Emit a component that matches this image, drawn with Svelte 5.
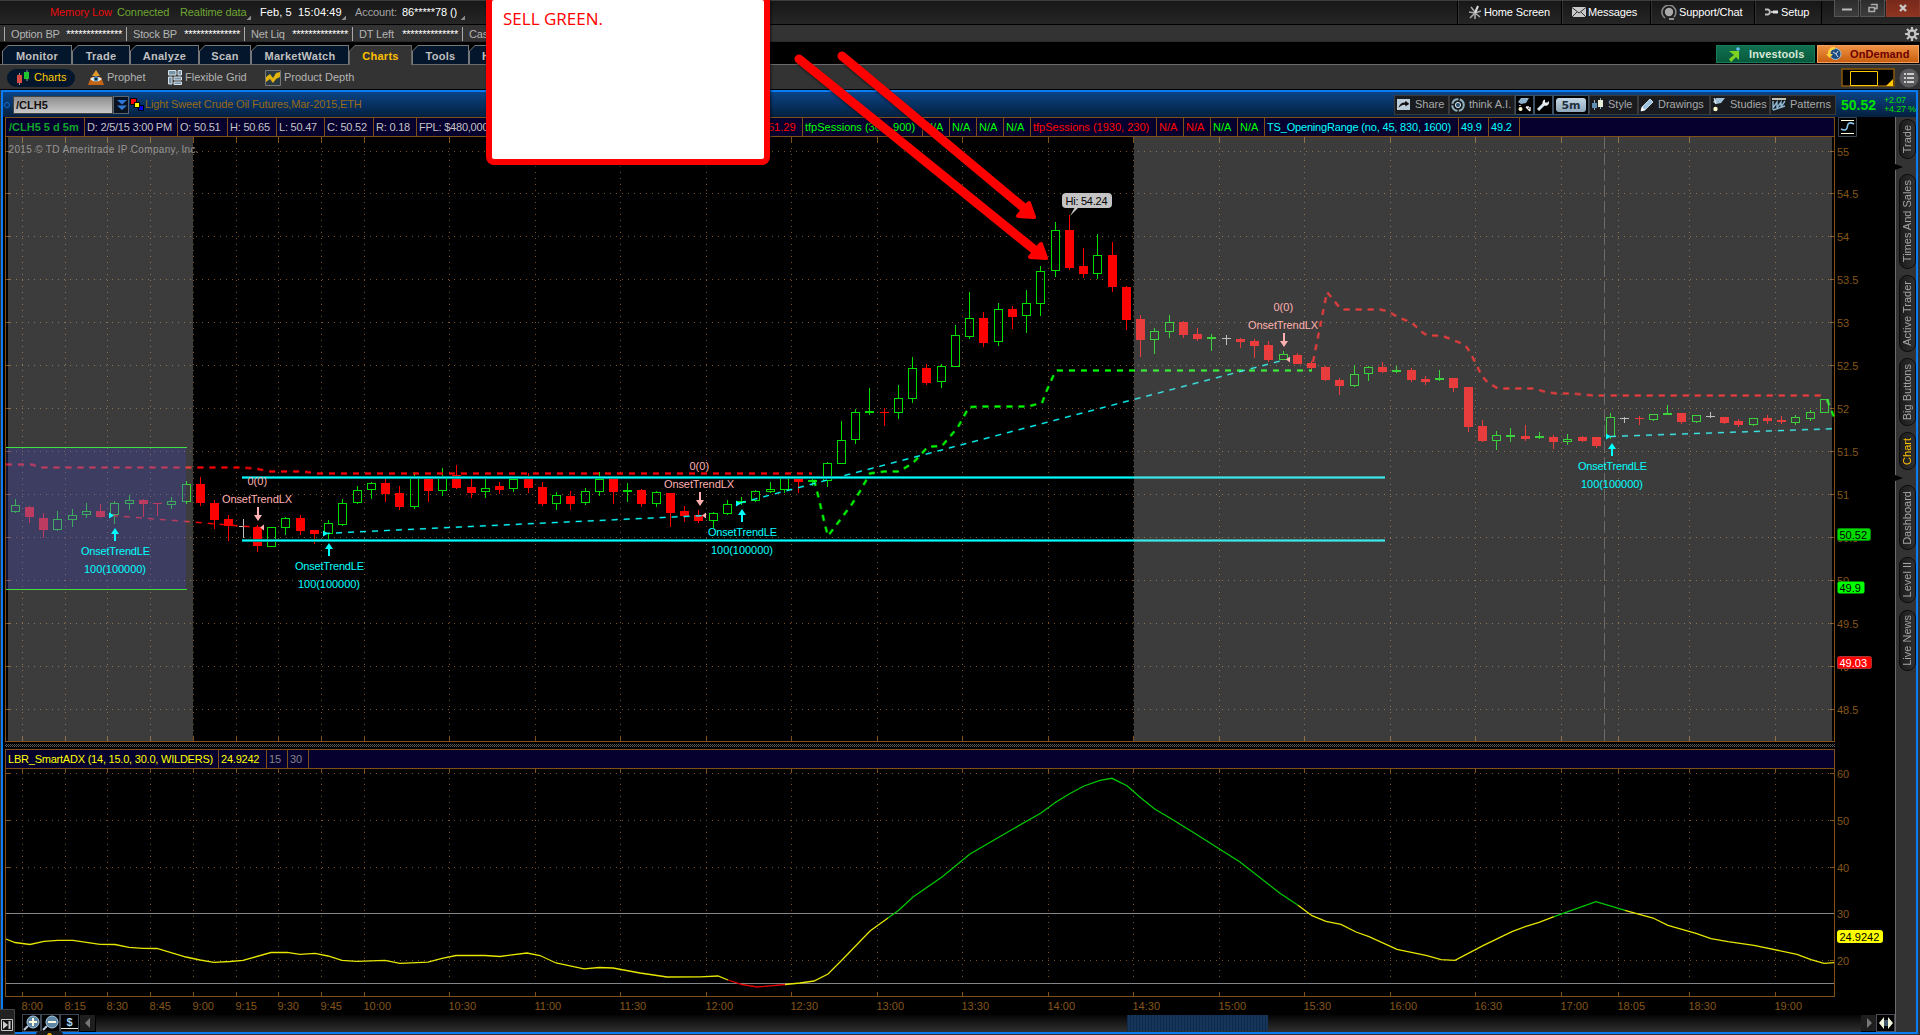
<script lang="ts">
	const accountStats = [
		{ label: 'Option BP', gap: 122 },
		{ label: 'Stock BP', gap: 118 },
		{ label: 'Net Liq', gap: 108 },
		{ label: 'DT Left', gap: 110 },
		{ label: 'Cash', gap: 100 },
	];

	const tabs = [
		{ name: 'Monitor', width: 70 },
		{ name: 'Trade', width: 58 },
		{ name: 'Analyze', width: 69 },
		{ name: 'Scan', width: 52 },
		{ name: 'MarketWatch', width: 98 },
		{ name: 'Charts', width: 63, active: true },
		{ name: 'Tools', width: 57 },
		{ name: 'Help', width: 51 },
	];

	const legend = [
		{ text: '/CLH5 5 d 5m', width: 79, kind: 'symbol' },
		{ text: 'D: 2/5/15 3:00 PM', width: 93, kind: 'plain' },
		{ text: 'O: 50.51', width: 50, kind: 'plain' },
		{ text: 'H: 50.65', width: 49, kind: 'plain' },
		{ text: 'L: 50.47', width: 48, kind: 'plain' },
		{ text: 'C: 50.52', width: 49, kind: 'plain' },
		{ text: 'R: 0.18', width: 43, kind: 'plain' },
		{ text: 'FPL: $480,000', width: 349, kind: 'plain' },
		{ text: '51.29', width: 37, kind: 'red' },
		{ text: 'tfpSessions (300, 900)', width: 120, kind: 'green' },
		{ text: 'N/A', width: 27, kind: 'green' },
		{ text: 'N/A', width: 27, kind: 'green' },
		{ text: 'N/A', width: 27, kind: 'green' },
		{ text: 'N/A', width: 27, kind: 'green' },
		{ text: 'tfpSessions (1930, 230)', width: 126, kind: 'red' },
		{ text: 'N/A', width: 27, kind: 'red' },
		{ text: 'N/A', width: 27, kind: 'red' },
		{ text: 'N/A', width: 27, kind: 'green' },
		{ text: 'N/A', width: 27, kind: 'green' },
		{ text: 'TS_OpeningRange (no, 45, 830, 1600)', width: 194, kind: 'cyan' },
		{ text: '49.9', width: 30, kind: 'cyan' },
		{ text: '49.2', width: 31, kind: 'cyan' },
	];

	const adxLegend = [
		{ text: 'LBR_SmartADX (14, 15.0, 30.0, WILDERS)', width: 213, kind: 'yellow' },
		{ text: '24.9242', width: 48, kind: 'yellow' },
		{ text: '15', width: 21, kind: 'gray' },
		{ text: '30', width: 21, kind: 'gray' },
	];

	const sideTabs = [
		{ name: 'Trade', height: 40, gap: 15 },
		{ name: 'Times And Sales', height: 95, gap: 6 },
		{ name: 'Active Trader', height: 77, gap: 6 },
		{ name: 'Big Buttons', height: 68, gap: 6 },
		{ name: 'Chart', height: 38, gap: 15, active: true },
		{ name: 'Dashboard', height: 65, gap: 7 },
		{ name: 'Level II', height: 46, gap: 7 },
		{ name: 'Live News', height: 61, gap: 0 },
	];

	const times: [number, string][] = [
		[22, '8:00'], [65, '8:15'], [107, '8:30'], [150, '8:45'], [193, '9:00'], [236, '9:15'],
		[278, '9:30'], [321, '9:45'], [364, '10:00'], [449, '10:30'], [535, '11:00'], [620, '11:30'],
		[706, '12:00'], [791, '12:30'], [877, '13:00'], [962, '13:30'], [1048, '14:00'], [1133, '14:30'],
		[1219, '15:00'], [1304, '15:30'], [1390, '16:00'], [1475, '16:30'], [1561, '17:00'], [1618, '18:05'],
		[1689, '18:30'], [1775, '19:00'],
	];

	const prices = Array.from({ length: 14 }, (_, i) => ({
		label: String(55 - i * 0.5),
		y: i === 0 ? 151 : 150 + i * 43,
	}));

	const adxLevels = [
		{ label: '60', y: 773 },
		{ label: '50', y: 820 },
		{ label: '40', y: 867 },
		{ label: '30', y: 913 },
		{ label: '20', y: 960 },
	];

	// high, body top, body bottom, low, up / down / flat
	const candles: [number, number, number, number, string][] = [
		[499, 505, 512, 513, 'g'], [506, 507, 517, 523, 'r'], [513, 518, 530, 538, 'r'], [511, 519, 530, 531, 'g'],
		[509, 515, 520, 527, 'g'], [503, 511, 515, 518, 'g'], [504, 511, 517, 518, 'r'], [501, 503, 515, 524, 'g'],
		[495, 500, 504, 510, 'g'], [499, 500, 504, 517, 'r'], [503, 503, 504, 516, 'r'], [497, 501, 505, 509, 'g'],
		[481, 484, 502, 504, 'g'], [477, 484, 503, 506, 'r'], [500, 503, 520, 529, 'r'], [515, 519, 526, 541, 'r'],
		[519, 526, 527, 538, 'w'], [525, 527, 546, 552, 'r'], [527, 527, 547, 547, 'g'], [517, 518, 528, 535, 'g'],
		[515, 518, 531, 535, 'r'], [530, 530, 534, 544, 'r'], [520, 523, 534, 540, 'g'], [499, 503, 525, 526, 'g'],
		[486, 490, 503, 504, 'g'], [482, 483, 490, 499, 'g'], [479, 483, 494, 502, 'r'], [486, 493, 507, 510, 'r'],
		[472, 478, 507, 509, 'g'], [478, 479, 491, 502, 'r'], [468, 476, 491, 496, 'g'], [465, 475, 488, 489, 'r'],
		[478, 487, 493, 498, 'r'], [478, 488, 492, 498, 'g'], [482, 486, 490, 494, 'r'], [478, 479, 489, 492, 'g'],
		[473, 479, 488, 493, 'r'], [482, 487, 504, 506, 'r'], [492, 495, 504, 510, 'g'], [491, 496, 504, 510, 'r'],
		[488, 491, 503, 505, 'g'], [472, 479, 492, 496, 'g'], [476, 478, 492, 504, 'r'], [483, 490, 492, 502, 'g'],
		[489, 490, 504, 507, 'r'], [491, 492, 504, 507, 'g'], [493, 493, 513, 527, 'r'], [506, 511, 516, 522, 'r'],
		[510, 515, 521, 523, 'r'], [512, 513, 521, 528, 'g'], [500, 504, 514, 515, 'g'], [497, 501, 503, 505, 'g'],
		[490, 491, 501, 502, 'g'], [482, 489, 492, 493, 'g'], [478, 478, 490, 493, 'g'], [478, 478, 482, 493, 'r'],
		[478, 480, 482, 486, 'g'], [462, 463, 481, 487, 'g'], [421, 440, 464, 464, 'g'], [409, 412, 440, 444, 'g'],
		[388, 411, 413, 415, 'g'], [408, 412, 413, 426, 'r'], [385, 398, 413, 419, 'g'], [357, 368, 399, 403, 'g'],
		[364, 368, 383, 385, 'r'], [364, 366, 382, 388, 'g'], [325, 335, 367, 367, 'g'], [292, 318, 337, 339, 'g'],
		[312, 318, 343, 347, 'r'], [303, 309, 342, 346, 'g'], [306, 309, 317, 329, 'r'], [290, 303, 316, 333, 'g'],
		[266, 271, 304, 316, 'g'], [222, 230, 271, 277, 'g'], [215, 230, 268, 270, 'r'], [248, 266, 274, 278, 'r'],
		[234, 255, 274, 279, 'g'], [242, 255, 287, 292, 'r'], [286, 287, 320, 330, 'r'], [315, 319, 340, 357, 'r'],
		[328, 331, 340, 354, 'g'], [315, 322, 332, 338, 'g'], [321, 322, 335, 338, 'r'], [328, 334, 339, 341, 'r'],
		[334, 337, 339, 351, 'g'], [335, 338, 339, 345, 'w'], [338, 339, 342, 348, 'r'], [339, 341, 346, 358, 'r'],
		[341, 345, 360, 362, 'r'], [351, 354, 360, 360, 'g'], [353, 355, 364, 364, 'r'], [361, 363, 368, 371, 'r'],
		[366, 367, 380, 381, 'r'], [378, 380, 386, 395, 'r'], [365, 374, 386, 387, 'g'], [366, 367, 374, 381, 'g'],
		[362, 367, 372, 373, 'r'], [366, 370, 372, 373, 'g'], [368, 370, 380, 382, 'r'], [376, 379, 382, 385, 'r'],
		[370, 378, 380, 381, 'g'], [378, 378, 388, 392, 'r'], [387, 387, 427, 432, 'r'], [420, 426, 441, 442, 'r'],
		[431, 435, 441, 450, 'g'], [428, 435, 437, 442, 'g'], [425, 436, 439, 441, 'r'], [432, 436, 438, 439, 'g'],
		[435, 437, 442, 449, 'r'], [434, 439, 442, 445, 'g'], [436, 437, 441, 442, 'r'], [437, 437, 446, 448, 'r'],
		[413, 417, 437, 439, 'g'], [417, 418, 419, 423, 'w'], [416, 418, 419, 425, 'r'], [414, 414, 420, 421, 'g'],
		[405, 413, 415, 415, 'g'], [413, 413, 422, 424, 'r'], [415, 415, 422, 423, 'g'], [412, 416, 417, 418, 'w'],
		[417, 417, 423, 424, 'r'], [419, 421, 425, 427, 'r'], [418, 418, 425, 426, 'g'], [415, 418, 421, 424, 'r'],
		[416, 420, 422, 424, 'r'], [415, 417, 423, 425, 'g'], [410, 412, 419, 421, 'g'], [399, 399, 413, 413, 'g'],
	];
	const bars = candles.map(([high, top, bottom, low, kind], i) => ({
		x: Math.floor(15.2 + i * 14.245),
		high, top, bottom, low, kind,
		hollow: kind === 'g' && bottom - top > 2,
	}));

	const trails = [
		{ kind: 'down', points: '6,464.5 32,464.5 40,467.5 243,467.5 258,469 270,471.5 304,471.5 316,473.5 812,473.5' },
		{ kind: 'up', points: '814,480 817,491 825,525 828,536 852,504 859,493 870,473.5 884,471.5 899,471.5 913,463 928,446.7 942,446 958,427 969,407 984,406.5 1027,406.5 1042,403 1047,390 1055,372 1057,370.5 1312,370.5' },
		{ kind: 'down', points: '1313,362 1327,292 1340,308 1343,309.5 1380,309.5 1387,311 1398,317 1412,323 1422,332 1427,335.5 1442,335.7 1453,340 1465,345 1470,352 1476,364 1482,376 1488,382.7 1498,388.5 1533,388.5 1548,392.5 1557,393.5 1570,393.5 1583,394.5 1593,395.5 1824,395.5' },
		{ kind: 'up', points: '1827,399.7 1834,417' },
	];

	const trades = [
		{ kind: 'lose', points: '112,515.5 262,527.7' },
		{ kind: 'win', points: '324,533.5 460,527 705,515.5' },
		{ kind: 'win', points: '740,503 1284,360' },
		{ kind: 'win', points: '1610,436.5 1834,428.7' },
	];

	const entries = [
		{ x: 115, y: 528, mx: 109, my: 515 },
		{ x: 329, y: 543, mx: 323, my: 533 },
		{ x: 742, y: 509, mx: 736, my: 503 },
		{ x: 1612, y: 443, mx: 1606, my: 436 },
	];
	const exits = [
		{ x: 258, y: 507, mx: 264, my: 527 },
		{ x: 700, y: 492, mx: 706, my: 515 },
		{ x: 1284, y: 333, mx: 1290, my: 359 },
	];

	const adx = [
		{ color: '#e6e600', points: '6,939 15,942.5 30,944.5 44,941.3 58,940.4 73,940.4 100,944.4 115,944.5 129,947.4 143,948.4 157,948.5 186,957 200,960 214,962.3 230,961.5 243,960.4 271,952.5 287,952.4 300,954.4 315,953.4 328,956 342,960.4 357,961.4 385,960.4 400,963.4 428,962.2 442,958.4 456,955.5 485,955.5 500,956.5 527,953 540,955.5 556,963 584,968.8 599,967.5 613,968 640,973 667,977 700,976.8 718,976 728,980' },
		{ color: '#e00000', points: '728,980 742,984.5 757,987 785,984.5' },
		{ color: '#e6e600', points: '785,984.5 800,983 814,981 828,974 842,960 870,931 888,918' },
		{ color: '#00c800', points: '888,918 899,910 913,897 942,877 970,854 1013,829 1041,813 1056,802 1070,793.5 1084,786 1100,780.3 1112,778.3 1127,785.7 1141,798 1155,809.3 1170,818 1199,836 1240,862 1280,893.3 1298,905.3' },
		{ color: '#e6e600', points: '1298,905.3 1312,915.7 1326,921.3 1341,924.3 1356,932 1369,936.7 1397,949.3 1427,955.7 1441,959.7 1455,960.4 1483,945.7 1512,931.7 1526,926.3 1539,922.3 1554,916.7' },
		{ color: '#00c800', points: '1554,916.7 1596,901.7 1625,910.3' },
		{ color: '#e6e600', points: '1625,910.3 1653,918 1668,925.3 1696,933.3 1711,938.7 1728,941.7 1754,945.3 1797,954.3 1811,959.7 1824,963.4 1834,962.7' },
	];
</script>

<div class="screen">
	<header class="topbar">
		<div class="status">
			<span class="red" style="width: 67px">Memory Low</span>
			<span class="ok" style="width: 63px">Connected</span>
			<span class="ok" style="width: 66px">Realtime data</span>
			<i class="corner"></i>
			<span class="white wide" style="width: 81px">Feb, 5&nbsp; 15:04:49</span>
			<i class="corner"></i>
			<span class="dim" style="width: 47px">Account:</span>
			<span class="white" style="width: 58px">86*****78 ()</span>
			<i class="corner"></i>
		</div>
		<nav class="menu">
			<a style="width: 104px">
				<svg width="14" height="15" viewBox="0 0 14 15"><g stroke="#a8a8a8" stroke-width="1.6"><path d="M7 8V14M7 8L1 7M7 8L2 13M7 8L12 12M7 8L13 6M7 7L3 2" /><path d="M7 8L10 1" stroke="#ddd" stroke-width="2" /></g></svg>
				Home Screen
			</a>
			<a style="width: 89px">
				<svg width="14" height="10" viewBox="0 0 14 10"><path d="M0 0H14V10H0Z" fill="#c8c8c8" /><path d="M0 .5L7 6L14 .5M0 10L5 5M14 10L9 5" stroke="#333" fill="none" /></svg>
				Messages
			</a>
			<a style="width: 104px">
				<svg width="16" height="15" viewBox="0 0 16 15"><circle cx="8" cy="7" r="4.2" fill="#aaa" /><path d="M4 13A7 7 0 1 1 13 12" stroke="#888" stroke-width="1.6" fill="none" /><path d="M8 14H13" stroke="#bbb" stroke-width="1.5" /></svg>
				Support/Chat
			</a>
			<a style="width: 67px">
				<svg width="14" height="8" viewBox="0 0 14 8"><path d="M0 1.5H3A2.6 2.6 0 0 1 3 6.5H0M6 4H13" stroke="#bbb" stroke-width="2" fill="none" /><path d="M8 4H13" stroke="#ddd" stroke-width="3" /></svg>
				Setup
			</a>
		</nav>
		<div class="window-buttons">
			<button aria-label="Minimize"><svg width="10" height="10"><path d="M0 6.5H10" stroke="#bbb" stroke-width="2" /></svg></button>
			<button aria-label="Restore"><svg width="10" height="10"><path d="M3.5 1V1.5H9V5.5H7" stroke="#aaa" fill="none" stroke-width="1.6" /><path d="M1 4.5H6.5V8.5H1Z" stroke="#aaa" fill="none" stroke-width="1.6" /></svg></button>
			<button class="close" aria-label="Close"><svg width="8" height="8"><path d="M1 1L7 7M7 1L1 7" stroke="#c8c8c8" stroke-width="2.4" /></svg></button>
		</div>
	</header>

	<div class="account">
		{#each accountStats as stat}
			<div class="stat" style="width: {stat.gap}px"><span>{stat.label}</span><b>**************</b></div>
		{/each}
		<svg class="gear" width="14" height="14" viewBox="-7 -7 14 14"><circle r="3.5" stroke="#c4c4c4" stroke-width="2.4" fill="none" /><path d="M0-7V-4M0 4V7M-7 0H-4M4 0H7M-5-5L-3-3M5 5L3 3M-5 5L-3 3M5-5L3-3" stroke="#c4c4c4" stroke-width="2.2" /></svg>
	</div>

	<div class="tabs">
		{#each tabs as tab}
			<div class="tab" class:active={tab.active} style="width: {tab.width}px"><span>{tab.name}</span></div>
		{/each}
		<div class="promo investools">
			<svg width="13" height="15" viewBox="0 0 13 15"><path d="M1 4L11 4V13L8 10L3 15L1 12L6 8Z" fill="#7ed321" /><circle cx="10" cy="2" r="1.8" fill="#6cc0ff" /></svg>
			Investools
		</div>
		<div class="promo ondemand">
			<svg width="16" height="14" viewBox="0 0 16 14"><circle cx="9.5" cy="7" r="5.5" fill="#1d4b7d" stroke="#9fc4e0" /><path d="M7 5L10 7L12 4M10 7L12 10" stroke="#cde" fill="none" /><path d="M9 1Q3 1 3 7" stroke="#ffd23c" stroke-width="2.4" fill="none" /><path d="M0 7H7L3.5 11Z" fill="#ffd23c" /></svg>
			OnDemand
		</div>
	</div>

	<div class="views">
		<div class="view on">
			<svg width="15" height="15" viewBox="0 0 15 15"><path d="M3.5 3V15M11 0V11" stroke="#999" /><path d="M1 5H6V13H1Z" fill="#d84c42" /><path d="M8 2H13V9H8Z" fill="#1ec32e" /></svg>
			<span>Charts</span>
		</div>
		<div class="view" style="width: 80px">
			<svg width="16" height="15" viewBox="0 0 16 15"><path d="M8 0L12 6H4Z" fill="#e39a2d" /><path d="M3 7H13L16 15H0Z" fill="#c26516" /><path d="M2 9Q8 4 14 9Q8 14 2 9Z" fill="#e8f2f6" /><circle cx="8" cy="9" r="2.4" fill="#3d7fae" /><circle cx="8" cy="9" r="1" fill="#000" /></svg>
			<span>Prophet</span>
		</div>
		<div class="view" style="width: 97px">
			<svg width="14" height="15" viewBox="0 0 14 15"><path d="M.5.5H8V5H.5ZM10 .5H13.5V5H10ZM.5 7H4V14H.5ZM6 7H13.5V10H6ZM6 12H13.5V14.5H6Z" fill="#7893a6" stroke="#d7e3ea" /></svg>
			<span>Flexible Grid</span>
		</div>
		<div class="view">
			<svg width="16" height="16" viewBox="0 0 16 16"><path d="M.5.5H15.5V15.5H.5Z" fill="#2a3a40" stroke="#777" /><path d="M1 7L5 4L8 8L11 3L15 2V7L11 9L8 13L5 9L1 12Z" fill="#e2b410" /></svg>
			<span>Product Depth</span>
		</div>
		<svg class="layout" width="54" height="19"><path d="M1 1H53V18H1Z" fill="#000" stroke="#8a5a08" stroke-width="1.5" /><path d="M9.5 3.5H36.5V17.5H9.5Z" fill="none" stroke="#ffc800" /><path d="M52 11V18H45Z" fill="#ffc800" /></svg>
		<svg class="list" width="20" height="20"><circle cx="10" cy="10" r="9.5" fill="#5a5a5f" /><path d="M5 6H7M8 6H15M5 10H7M8 10H15M5 14H7M8 14H15" stroke="#ccc" stroke-width="2" /></svg>
	</div>

	<main class="frame">
		<div class="head">
			<i class="dot"></i>
			<div class="symbol-input">/CLH5</div>
			<div class="dropdown"><svg width="12" height="12"><path d="M1 1H11L6 5.5ZM1 6.5H11L6 11Z" fill="#2f78d8" /></svg></div>
			<svg width="14" height="14" class="link"><path d="M.5.5H6.5V6.5H.5Z" fill="#f00" stroke="#000" /><path d="M8.5 7.5H13.5V12.5H8.5Z" fill="#00e" stroke="#000" /><path d="M4.5 4.5H9.5V9.5H4.5Z" fill="#ff0" stroke="#000" /></svg>
			<span class="title">Light Sweet Crude Oil Futures,Mar-2015,ETH</span>
			<div class="tools">
				<div class="tool" style="width: 55px"><svg width="15" height="13" viewBox="0 0 15 13"><path d="M1 1H14V12H1Z" fill="#b9cdd9" /><path d="M2 11Q3 4 9 4V2L14 6L9 9V7Q5 7 2 11Z" fill="#111" stroke="#eef" stroke-width=".6" /></svg>Share</div>
				<div class="tool" style="width: 66px"><svg width="14" height="14" viewBox="0 0 14 14"><circle cx="7" cy="7" r="5.8" fill="none" stroke="#8fb0bd" stroke-width="2" stroke-dasharray="8 1.5" /><circle cx="7" cy="7" r="2.6" fill="#2d536e" stroke="#d5e8ef" /></svg>think A.I.</div>
				<div class="tool dark" style="width: 19px"><svg width="14" height="15" viewBox="0 0 14 15"><path d="M4 1H12L9 6L4 7L1 5Z" fill="#8fb2cc" /><path d="M3 8V9M12 10L9 10M9 10L13 14M13 14V10" stroke="#eee" stroke-width="1.4" fill="none" /><circle cx="3.5" cy="12" r="2" fill="#fffbd0" /></svg></div>
				<div class="tool dark" style="width: 19px"><svg width="14" height="14" viewBox="0 0 14 14"><path d="M2 12L9 5" stroke="#d7e6ec" stroke-width="3" /><path d="M12.5 3A3.2 3.2 0 1 1 9 1.5V4.5H11.5Z" fill="#e9f1f4" /></svg></div>
				<div class="tool dark" style="width: 36px"><b class="interval">5m</b></div>
				<div class="tool" style="width: 49px"><svg width="13" height="13" viewBox="0 0 13 13"><path d="M3.5 2V12M9.5 0V11" stroke="#8fb0c4" /><path d="M1 5H6V10H1Z" fill="#5e8db0" /><path d="M7 2H12V9H7Z" fill="#e8edd8" /></svg>Style</div>
				<div class="tool" style="width: 72px"><svg width="14" height="14" viewBox="0 0 14 14"><path d="M10 1L13 4L5 12L1 13L2 9Z" fill="#9cc3df" stroke="#e6eff4" stroke-width=".8" /><path d="M1 13L2 9L5 12Z" fill="#fff" /></svg>Drawings</div>
				<div class="tool" style="width: 60px"><svg width="14" height="15" viewBox="0 0 14 15"><path d="M4 1H13L9 6L4 7L1 5Z" fill="#9fbfd6" /><path d="M2 1L4 7" stroke="#eee" /><circle cx="3.5" cy="12" r="2.2" fill="#fffbd0" /></svg>Studies</div>
				<div class="tool" style="width: 66px"><svg width="14" height="13" viewBox="0 0 14 13"><path d="M0 1H14" stroke="#e9edd8" stroke-width="1.6" /><path d="M1 3V10L5 4V10L9 4V9L13 3M1 12L13 8" stroke="#8fb8d4" stroke-width="1.4" fill="none" /></svg>Patterns</div>
			</div>
			<strong class="last">50.52</strong>
			<div class="change"><span>+2.07</span><span>+4.27 %</span></div>
		</div>

		<div class="body">
			<section class="chart">
				<div class="legend-row">
					<div class="legend">
						{#each legend as item}
							<span class={item.kind} style="width: {item.width}px">{item.text}</span>
						{/each}
					</div>
					<svg class="curve" width="19" height="20"><path d="M.5.5H18.5V19.5H.5Z" fill="#000" stroke="#3c4753" /><path d="M3 3.5H16M3 16.5H16" stroke="#fffde0" /><path d="M3 12Q9 15 9.5 9Q10 4 16 7" stroke="#8ac6f0" stroke-width="1.6" fill="none" /></svg>
				</div>

				<svg class="price" width="1892" height="612" viewBox="3 137 1892 612">
					<rect x="3" y="137" width="1892" height="612" fill="#000" />
					<g class="crisp dots">
						{#each times as [x]}
							<path d="M{x + 0.5} 142V737" />
						{/each}
						{#each prices as price}
							<path d="M10 {price.y + 0.5}H1830" />
						{/each}
					</g>
					<g class="crisp ticks">
						{#each times as [x]}
							<path d="M{x + 0.5} 137V142M{x + 0.5} 737V741" />
						{/each}
						{#each prices as price}
							<path d="M6 {price.y + 0.5}H11M1830 {price.y + 0.5}H1834" />
						{/each}
						<path d="M5.5 137V742M5 741.5H1835M1834.5 137V742" />
					</g>

					<g class="crisp">
						{#each bars as bar}
							{#if bar.hollow}
								<path class="up" d="M{bar.x + 0.5} {bar.high}V{bar.top}M{bar.x + 0.5} {bar.bottom}V{bar.low}M{bar.x - 3.5} {bar.top + 0.5}H{bar.x + 4.5}V{bar.bottom - 0.5}H{bar.x - 3.5}Z" />
							{:else}
								<rect class={bar.kind} x={bar.x} y={bar.high} width="1" height={bar.low - bar.high} />
								<rect class={bar.kind} x={bar.x - 4} y={bar.top} width="9" height={bar.bottom - bar.top} />
							{/if}
						{/each}
					</g>

					{#each trails as trail}
						<polyline class="trail halo {trail.kind}" points={trail.points} />
						<polyline class="trail {trail.kind}" points={trail.points} />
					{/each}
					{#each trades as trade}
						<polyline class="trade halo {trade.kind}" points={trade.points} />
						<polyline class="trade {trade.kind}" points={trade.points} />
					{/each}
					<g class="crisp">
						<path d="M242 477.5H1385M242 540.5H1385" stroke="#009c9c" stroke-width="3" />
						<path d="M242 477.5H1385M242 540.5H1385" stroke="#00ffff" />
					</g>

					<path d="M8 137H193V741H8ZM1134 137H1832V741H1134Z" fill="#bbb" fill-opacity=".32" />
					<rect x="6" y="447" width="180" height="143" fill="#4440c8" fill-opacity=".27" />
					<path class="crisp" d="M6 447.5H187M6 589.5H187" stroke="#3fe03f" />
					<path class="crisp" d="M1604.5 137V741" stroke="#6c6c6c" stroke-dasharray="12 4" />

					{#each entries as e}
						<path d="M{e.mx} {e.my - 2.5}L{e.mx + 5} {e.my + 0.5}L{e.mx} {e.my + 3.5}Z" fill="#0ff" />
						<path d="M{e.x} {e.y}L{e.x + 4} {e.y + 6}H{e.x + 1}V{e.y + 13}H{e.x - 1}V{e.y + 6}H{e.x - 4}Z" fill="#0ff" />
						<text class="le" x={e.x - 34} y={e.y + 27} textLength="69">OnsetTrendLE</text>
						<text class="le" x={e.x - 31} y={e.y + 45} textLength="62">100(100000)</text>
					{/each}
					{#each exits as e}
						<path d="M{e.mx} {e.my - 2.5}L{e.mx - 4} {e.my + 0.5}L{e.mx} {e.my + 3.5}Z" fill="#ffb0b0" />
						<path d="M{e.x} {e.y + 14}L{e.x + 4} {e.y + 8}H{e.x + 1}V{e.y}H{e.x - 1}V{e.y + 8}H{e.x - 4}Z" fill="#ffb0b0" />
						<text class="lx" x={e.x - 36} y={e.y - 4} textLength="70">OnsetTrendLX</text>
						<text class="lx" x={e.x - 10.5} y={e.y - 22}>0(0)</text>
					{/each}

					<path d="M1075 207L1070 216L1079 207Z" fill="#c4c4c4" />
					<rect x="1062" y="193" width="50" height="15" rx="4" fill="#c4c4c4" />
					<text x="1065.5" y="205" textLength="42" fill="#000">Hi: 54.24</text>
					<text class="watermark" x="8.5" y="153" textLength="190">2015 © TD Ameritrade IP Company, Inc.</text>

					{#each prices as price}
						<text class="axis" x="1837" y={price.y + 5}>{price.label}</text>
					{/each}
					<rect x="1837.5" y="528.5" width="33" height="12" rx="2" fill="#00dc00" stroke="#008c00" />
					<text x="1839.5" y="539" fill="#000">50.52</text>
					<rect x="1837.5" y="581.5" width="27" height="12" rx="2" fill="#0f0" />
					<text x="1839.5" y="592" fill="#000">49.9</text>
					<rect x="1837.5" y="656.5" width="34" height="12" rx="2" fill="#f00" stroke="#a33" />
					<text x="1839.5" y="667" fill="#fff">49.03</text>

					<defs>
						<pattern id="grip" width="2" height="2" patternUnits="userSpaceOnUse"><rect width="1" height="1" fill="#555" /><rect x="1" y="1" width="1" height="1" fill="#555" /></pattern>
					</defs>
					<rect x="5" y="744" width="1830" height="3" fill="url(#grip)" />
				</svg>

				<div class="legend-row">
					<div class="legend">
						{#each adxLegend as item}
							<span class={item.kind} style="width: {item.width}px">{item.text}</span>
						{/each}
					</div>
				</div>

				<svg class="adx" width="1892" height="245" viewBox="3 769 1892 245">
					<rect x="3" y="769" width="1892" height="245" fill="#000" />
					<g class="crisp dots">
						{#each times as [x]}
							<path d="M{x + 0.5} 778V980" />
						{/each}
						{#each adxLevels as level}
							{#if level.label !== '30'}
								<path d="M10 {level.y + 0.5}H1830" />
							{/if}
						{/each}
					</g>
					<g class="crisp ticks">
						{#each times as [x]}
							<path d="M{x + 0.5} 769V773M{x + 0.5} 992V996" />
						{/each}
						{#each adxLevels as level}
							<path d="M6 {level.y + 0.5}H11M1830 {level.y + 0.5}H1834" />
						{/each}
						<path d="M5.5 769V997M5 996.5H1835M1834.5 769V997" />
						<path d="M6 913.5H1834M6 983.5H1834" stroke="#868686" />
					</g>
					{#each adx as part}
						<polyline points={part.points} fill="none" stroke={part.color} stroke-width="1.3" />
					{/each}
					{#each adxLevels as level}
						<text class="axis" x="1837" y={level.y + 5}>{level.label}</text>
					{/each}
					<rect x="1837" y="930" width="46" height="13" rx="3" fill="#ff0" />
					<text x="1839.5" y="941" fill="#000">24.9242</text>
					{#each times as [x, label]}
						<text class="axis" x={x - 0.5} y="1010">{label}</text>
					{/each}
				</svg>

				<div class="scroll">
					<div class="zoom"><svg width="17" height="16" viewBox="0 0 17 16"><circle cx="10" cy="7" r="6" fill="#5f87a5" stroke="#a9cbe2" /><path d="M6 7H14M10 3V11" stroke="#fffde0" stroke-width="2" /><path d="M1 15L5 11" stroke="#bcd" stroke-width="2" /></svg></div>
					<div class="zoom"><svg width="17" height="16" viewBox="0 0 17 16"><circle cx="10" cy="7" r="6" fill="#5f87a5" stroke="#a9cbe2" /><path d="M6 7H14" stroke="#fffde0" stroke-width="2" /><path d="M1 15L5 11" stroke="#bcd" stroke-width="2" /></svg></div>
					<div class="zoom dollar">$</div>
					<div class="step"><svg width="6" height="10"><path d="M5 0V10L0 5Z" fill="#777" /></svg></div>
					<div class="track"><div class="thumb"></div></div>
					<div class="step last-step"><svg width="6" height="10"><path d="M1 0V10L6 5Z" fill="#777" /></svg></div>
					<div class="fit"><svg width="14" height="12"><path d="M5 0V12L0 6ZM9 0V12L14 6Z" fill="#f4f6dc" /><path d="M6 3V9M8 3V9" stroke="#7fb0dc" /></svg></div>
				</div>
			</section>

			<aside>
				{#each sideTabs as tab}
					<div class="side-tab" class:active={tab.active} style="height: {tab.height}px; margin-bottom: {tab.gap}px">
						<span>{tab.name}</span>
					</div>
					{#if tab.gap === 15}
						<i class="notch"></i>
					{/if}
				{/each}
			</aside>
		</div>
	</main>

	<div class="gadget"><svg width="12" height="12"><path d="M.5.5H11.5V11.5H.5Z" fill="#111" stroke="#ccc" /><path d="M2 2L7 6L2 10Z" fill="#ccc" /><path d="M8.5 2V10" stroke="#ccc" stroke-width="2" /></svg></div>
	<div class="bump"></div>

	<svg class="arrows" width="300" height="240" viewBox="780 40 300 240">
		<g stroke="#f00" fill="#f00" stroke-linecap="round" stroke-linejoin="round">
			<path d="M799 59L1036 251M842 56L1024 208" stroke-width="9" />
			<path d="M1046 258L1030 257L1039 246L1041 244ZM1034 217L1018 216L1027 205L1029 203Z" stroke-width="4" />
		</g>
	</svg>
	<div class="note">SELL GREEN.</div>
</div>

<style>
	:global(body) {
		margin: 0;
		background: #333;
	}

	.screen {
		position: relative;
		width: 1920px;
		height: 1035px;
		overflow: hidden;
		display: flex;
		flex-direction: column;
		background: #333;
		font: 11px/13px 'Liberation Sans', Arial, sans-serif;
		color: #b4b4b4;
		white-space: nowrap;
	}

	svg {
		display: block;
		flex: none;
	}

	.topbar {
		display: flex;
		height: 24px;
		box-sizing: border-box;
		border-top: 1px solid #3c3c3c;
		background: linear-gradient(#171717, #262626);
		box-shadow: 0 1px #000;
		margin-bottom: 1px;
	}

	.status {
		display: flex;
		align-items: center;
		padding-left: 50px;
		width: 1407px;
		letter-spacing: -0.1px;
	}

	.status .red { color: #e80c0c; }
	.status .ok { color: #6fa532; }
	.status .white { color: #fff; }
	.status .wide { letter-spacing: 0.1px; }
	.status .dim { color: #a4a4a4; }

	.corner {
		align-self: end;
		width: 4px;
		height: 4px;
		margin: 0 9px 4px 1px;
		background: linear-gradient(135deg, transparent 50%, #8a8a8a 50%);
	}

	.menu {
		display: flex;
		border-right: 1px solid #000;
		margin-right: 12px;
	}

	.menu a {
		box-sizing: border-box;
		display: flex;
		align-items: center;
		gap: 2px;
		padding-left: 10px;
		padding-bottom: 1px;
		border-left: 1px solid #000;
		box-shadow: inset 1px 0 #333;
		color: #fff;
		letter-spacing: -0.12px;
	}

	.window-buttons {
		display: flex;
		gap: 1px;
	}

	.window-buttons button {
		width: 25px;
		height: 17px;
		margin-top: -1px;
		padding: 0;
		border: 1px solid #555;
		border-top: 0;
		background: linear-gradient(#2c2c2c, #3c3c3c);
		display: flex;
		align-items: center;
		justify-content: center;
	}

	.window-buttons .close {
		width: 34px;
		background: linear-gradient(#78281a, #8e3421);
		border-color: #8a3a2a;
	}

	.account {
		display: flex;
		align-items: center;
		height: 17px;
		padding-left: 4px;
		box-shadow: inset 0 -1px #2a2a2a;
	}

	.stat {
		box-sizing: border-box;
		display: flex;
		justify-content: space-between;
		border-left: 1px solid #aaa;
		padding: 0 4px 0 6px;
		height: 14px;
		letter-spacing: -0.15px;
		line-height: 15px;
	}

	.stat b {
		font-weight: normal;
		color: #fff;
		letter-spacing: -0.3px;
	}

	.gear { margin-left: auto; margin-right: 1px; }

	.tabs {
		display: flex;
		box-sizing: border-box;
		height: 23px;
		padding: 3px 1px 0 2px;
		background: #000;
		border-bottom: 1px solid #6a6a6a;
	}

	.tab {
		background: #787878;
		clip-path: polygon(6px 0, 100% 0, 100% 100%, 0 100%, 0 6px);
		padding: 1px 1px 0 1px;
		box-sizing: border-box;
	}

	.tab span {
		display: block;
		height: 18px;
		line-height: 20px;
		text-align: center;
		font-weight: bold;
		letter-spacing: 0.25px;
		color: #c0c0c0;
		background: #04162b;
		clip-path: polygon(5px 0, 100% 0, 100% 100%, 0 100%, 0 5px);
	}

	.tab.active { margin-bottom: -1px; background: #666; }
	.tab.active span { background: #333; color: #ffc000; height: 20px; }

	.promo {
		box-sizing: border-box;
		display: flex;
		align-items: center;
		height: 18px;
		font-weight: bold;
		letter-spacing: 0.1px;
	}

	.investools {
		width: 99px;
		margin-left: auto;
		margin-right: 2px;
		padding-left: 11px;
		gap: 8px;
		background: linear-gradient(#0f7050, #085a3c);
		border: 1px solid #177a58;
		color: #d8e8d8;
	}

	.ondemand {
		width: 102px;
		padding-left: 8px;
		gap: 8px;
		background: linear-gradient(#ef9042, #c86010);
		border: 1px solid #f0a060;
		color: #6c0000;
	}

	.views {
		display: flex;
		align-items: center;
		height: 24px;
		padding: 1px 1px 0 7px;
		box-sizing: border-box;
		margin-bottom: 1px;
		box-shadow: 0 1px #000;
	}

	.view {
		display: flex;
		align-items: center;
		gap: 3px;
	}

	.view.on {
		box-sizing: border-box;
		width: 68px;
		height: 18px;
		margin-right: 13px;
		padding-left: 9px;
		border-radius: 9px;
		background: #04162b;
		color: #ffc800;
	}

	.layout { margin-left: auto; margin-right: 4px; }

	.frame {
		box-sizing: border-box;
		width: 1917px;
		height: 944px;
		margin-left: 1px;
		border: 2px solid #0a7cf4;
		background: #000;
	}

	.head {
		display: flex;
		align-items: center;
		height: 25px;
		background: linear-gradient(#0b4385, #04203f);
	}

	.dot {
		width: 4px;
		height: 4px;
		margin: 0 3px 0 1px;
		border: 1px solid #0a6cd4;
		border-radius: 50%;
	}

	.symbol-input {
		box-sizing: border-box;
		width: 100px;
		height: 18px;
		padding-left: 2px;
		border: 1px solid #444;
		background: linear-gradient(#8e8e8e, #c8c8c8);
		color: #111;
		font-weight: bold;
		line-height: 17px;
	}

	.dropdown {
		box-sizing: border-box;
		width: 16px;
		height: 18px;
		padding: 2px 0 0 2px;
		border: 1px solid #5a6470;
		background: #0a1220;
	}

	.link { margin: 0 1px; }

	.title {
		color: #9a6a14;
		letter-spacing: -0.14px;
	}

	.tools {
		display: flex;
		margin-left: auto;
		margin-right: 5px;
	}

	.tool {
		box-sizing: border-box;
		display: flex;
		align-items: center;
		gap: 4px;
		height: 20px;
		padding: 0 1px;
		border: 1px solid #3a3a3a;
		background: #191b1e;
		color: #a8a8a8;
	}

	.tool.dark { background: #000; border-color: #3c5064; }

	.interval {
		width: 30px;
		height: 14px;
		margin-left: 1px;
		border-radius: 3px;
		background: linear-gradient(#c3d5e2, #8fa8bb);
		color: #203040;
		font: bold 11px/15px 'DejaVu Sans', sans-serif;
		text-align: center;
	}

	.last {
		width: 43px;
		color: #00e000;
		font-size: 14px;
		line-height: 24px;
	}

	.change {
		display: flex;
		flex-direction: column;
		width: 32px;
		color: #00e000;
		font-size: 9px;
		line-height: 9px;
		letter-spacing: -0.2px;
		padding-top: 1px;
	}

	.body { display: flex; }
	.chart { width: 1892px; }

	.legend-row {
		display: flex;
		height: 20px;
		padding-left: 2px;
		background: #000;
	}

	.legend {
		box-sizing: border-box;
		display: flex;
		width: 1830px;
		border: 1px solid #7f5018;
		background: #06002f;
	}

	.legend span {
		box-sizing: border-box;
		flex: none;
		overflow: hidden;
		padding-left: 2px;
		border-right: 1px solid #7f5018;
		line-height: 19px;
	}

	.legend .symbol { color: #10a52c; font-weight: bold; padding-left: 3px; }
	.legend .plain { color: #c4c4c4; letter-spacing: -0.22px; }
	.legend .red { color: #f00; }
	.legend .green { color: #0f0; }
	.legend .cyan { color: #0ff; letter-spacing: -0.18px; }
	.legend .yellow { color: #ff0; letter-spacing: -0.22px; }
	.legend .gray { color: #868686; }

	.curve { margin-left: 3px; }

	.crisp { shape-rendering: crispEdges; }
	.dots { stroke: #7c5424; stroke-dasharray: 1 5; }
	.ticks { stroke: #7f5018; }

	.up { fill: none; stroke: #00dc00; }
	.g { fill: #00dc00; }
	.r { fill: #f00; }
	.w { fill: #c0c0c0; }

	.trail, .trade {
		fill: none;
		stroke-dasharray: 6 6;
	}

	.trail { stroke-width: 1.4; }
	.trade { stroke-width: 1; }
	.trail.halo { stroke-width: 3; stroke-opacity: 0.5; }
	.trade.halo { stroke-width: 2; stroke-opacity: 0.4; }
	.trail.down, .trade.lose { stroke: #f00; }
	.trail.up { stroke: #0f0; }
	.trade.win { stroke: #0ff; }

	.le { fill: #0ff; }
	.lx { fill: #ffb0b0; }
	.axis { fill: #85561b; }
	.watermark { fill: #949494; font-size: 10px; }

	.scroll {
		display: flex;
		align-items: center;
		height: 18px;
		padding-left: 19px;
		background: #000;
	}

	.zoom {
		box-sizing: border-box;
		width: 19px;
		height: 18px;
		border: 1px solid #3c4753;
		background: #000;
	}

	.dollar {
		color: #a8d4f0;
		font-weight: bold;
		line-height: 14px;
		text-align: center;
		box-shadow: inset 0 -2px #000, inset 0 -3px #eee;
	}

	.step {
		display: flex;
		align-items: center;
		justify-content: center;
		width: 15px;
		height: 16px;
		margin: 0 1px;
		background: #1e1e1e;
	}

	.last-step { margin: 0; }

	.track {
		flex: 1;
		height: 17px;
		padding-left: 1031px;
		background: linear-gradient(#050505, #303030);
	}

	.thumb {
		width: 141px;
		height: 16px;
		background: repeating-linear-gradient(90deg, #0e294a 0 1px, #16355a 1px 3px);
	}

	.fit {
		box-sizing: border-box;
		display: flex;
		align-items: center;
		justify-content: center;
		width: 19px;
		height: 18px;
		border: 1px solid #4a4a55;
	}

	aside {
		box-sizing: border-box;
		width: 21px;
		height: 915px;
		padding: 2px 0 0 3px;
		border-left: 1px solid #6c6c6c;
		background: #333;
	}

	.side-tab {
		box-sizing: border-box;
		display: flex;
		align-items: center;
		justify-content: center;
		width: 17px;
		border: 1px solid #0c0c0c;
		border-radius: 8px;
		background: linear-gradient(90deg, #1b1b1b, #303030);
		color: #a4a4a4;
	}

	.side-tab span {
		writing-mode: vertical-rl;
		transform: rotate(180deg);
	}

	.side-tab.active { color: #ffc000; }

	.notch {
		display: block;
		margin: -10px 0 4px -4px;
		width: 0;
		height: 0;
		border: 3px solid transparent;
		border-left: 8px solid #000;
		border-right: 0;
	}

	.gadget {
		position: absolute;
		left: 0;
		top: 1009px;
		box-sizing: border-box;
		width: 15px;
		height: 26px;
		padding: 9px 1px;
		border: 1px solid #444;
		border-left: 0;
		background: #222;
	}

	.bump {
		position: absolute;
		left: 36px;
		top: 1031px;
		width: 27px;
		height: 4px;
		border-radius: 4px 4px 0 0;
		background: radial-gradient(circle at 50% 100%, #e0a000 0 2px, #1a1a1a 2.5px);
	}

	.arrows {
		position: absolute;
		left: 780px;
		top: 40px;
		filter: drop-shadow(1px 2px 1px rgba(0, 0, 0, 0.5));
	}

	.note {
		position: absolute;
		left: 486px;
		top: -6px;
		box-sizing: border-box;
		width: 284px;
		height: 171px;
		padding: 12px 11px;
		border: 6px solid #f00;
		border-radius: 8px;
		background: #fff;
		box-shadow: 1px 2px 3px rgba(0, 0, 0, 0.6);
		color: #f00;
		font: 17px/13px 'Open Sans', 'Noto Sans', sans-serif;
	}
</style>
